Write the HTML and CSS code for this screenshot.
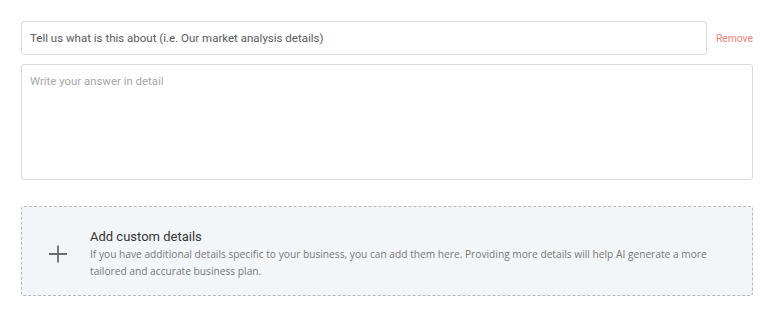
FILE: index.html
```html
<!DOCTYPE html>
<html lang="en">
<head>
    <meta charset="UTF-8">
    <title>Custom details</title>
    <link rel="stylesheet" href="styles.css">
</head>
<body>
    <div class="section">
        <div class="row">
            <input class="topic" type="text" placeholder="Tell us what is this about (i.e. Our market analysis details)">
            <a class="remove" href="#">Remove</a>
        </div>
        <textarea class="answer" placeholder="Write your answer in detail"></textarea>

        <div class="add-box">
            <svg class="plus" width="20" height="20" viewBox="0 0 20 20">
                <path d="M10 1.5v17M1 10h18" stroke="#6b6b6b" stroke-width="1.8" fill="none"/>
            </svg>
            <div class="add-text">
                <div class="add-title">Add custom details</div>
                <p>If you have additional details specific to your business, you can add them here. Providing more details will help AI generate a more tailored and accurate business plan.</p>
            </div>
        </div>
    </div>
</body>
</html>
```

FILE: styles.css
```css
body {
    margin: 0;
    background: #fff;
    font-family: Roboto, "Liberation Sans", sans-serif;
}

.section {
    width: 732px;
    padding: 21px 0 0 21px;
}

.row {
    display: flex;
    align-items: center;
}

.topic {
    flex: 1;
    height: 34px;
    box-sizing: border-box;
    border: 1px solid #dcdcdc;
    border-radius: 3px;
    padding: 0 8px;
    font-family: inherit;
    font-size: 11.5px;
    color: #333;
}

.topic::placeholder {
    color: #5a5a5a;
}

.remove {
    width: 46px;
    text-align: right;
    font-size: 10.3px;
    color: #f2827b;
    text-decoration: none;
}

.answer {
    display: block;
    width: 100%;
    height: 116px;
    box-sizing: border-box;
    margin-top: 9px;
    border: 1px solid #dcdcdc;
    border-radius: 3px;
    padding: 9px 8px;
    font-family: inherit;
    font-size: 11.4px;
    resize: none;
}

.answer::placeholder {
    color: #a8a8a8;
}

.add-box {
    display: flex;
    align-items: center;
    gap: 22px;
    height: 90px;
    box-sizing: border-box;
    margin-top: 26px;
    padding: 6px 34px 0 26px;
    border: 1px dashed #b8b8b8;
    border-radius: 3px;
    background: #f3f6f9;
}

.plus {
    flex-shrink: 0;
}

.add-title {
    font-size: 13px;
    color: #333;
}

.add-text p {
    margin: 2px 0 0;
    font-family: "Open Sans", "Noto Sans", sans-serif;
    font-size: 10.2px;
    line-height: 17px;
    color: #777;
}
```
